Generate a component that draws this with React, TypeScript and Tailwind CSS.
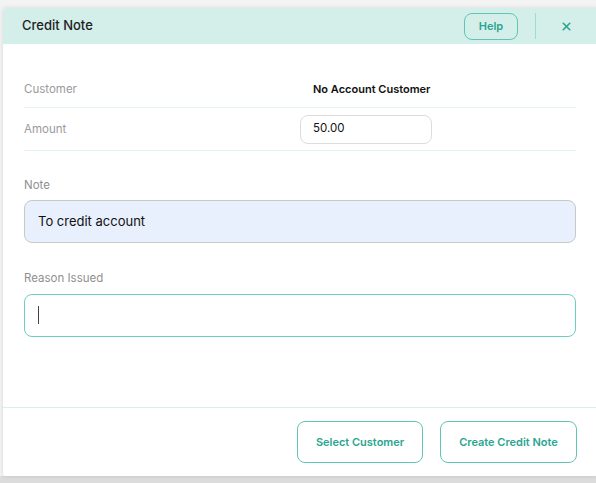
import { X } from 'lucide-react';

export default function App() {
  return (
    <div
      className="w-[596px] h-[483px] overflow-hidden bg-[#dcdcdc]"
      style={{ fontFamily: 'Inter, "Noto Sans", sans-serif' }}
    >
      <div className="h-[476px] bg-[#f3f3f3] pt-[8px] pl-[3px]">
        <div className="w-[595px] h-[468px] bg-white rounded-tl-[3px] rounded-bl-[3px] flex flex-col shadow-[0_0_4px_rgba(0,0,0,0.12)]">
          {/* header */}
          <div className="h-[36px] bg-[#d4eeea] flex items-center pl-[19px] pr-[25px] rounded-tl-[3px]">
            <h1 className="text-[13px] font-medium text-[#222] flex-1 -mt-[1px]">Credit Note</h1>
            <button className="h-[27px] w-[54px] rounded-lg border border-[#5ec6b2] text-[11px] font-semibold text-[#2aa58f]">
              Help
            </button>
            <div className="w-px h-[26px] bg-[#9fdccf] ml-[17px] mr-[24px]" />
            <X size={13} strokeWidth={3} className="text-[#2aa58f]" />
          </div>

          {/* body */}
          <div className="flex-1 px-[21px] pt-[28px]">
            <div className="w-[552px]">
              <div className="flex items-center h-[36px] border-b border-[#e4f3f0]">
                <span className="w-[289px] text-[11.5px] text-[#9a9a9a]">Customer</span>
                <span className="text-[11px] font-semibold text-[#111]">No Account Customer</span>
              </div>
              <div className="flex items-center h-[43px] border-b border-[#e4f3f0]">
                <span className="w-[276px] mt-[2px] text-[11.5px] text-[#9a9a9a]">Amount</span>
                <div className="w-[132px] h-[29px] rounded-lg border border-[#dcdcdc] flex items-center px-[12px] text-[11.5px] text-[#111]">
                  50.00
                </div>
              </div>

              <div className="mt-[26px] text-[11.5px] text-[#8f8f8f]">Note</div>
              <div className="mt-[6px] h-[43px] rounded-lg border border-[#c8c8c8] bg-[#e8effd] flex items-center px-[13px] text-[13px] text-[#111]">
                To credit account
              </div>

              <div className="mt-[27px] text-[11.5px] text-[#8f8f8f]">Reason Issued</div>
              <div className="mt-[6px] h-[43px] rounded-lg border border-[#6ccfbe] flex items-center px-[13px]">
                <span className="w-px h-[18px] bg-[#444]" />
              </div>
            </div>
          </div>

          {/* footer */}
          <div className="h-[69px] border-t border-[#dcefeb] flex items-center justify-end gap-[17px] pr-[21px]">
            <button className="w-[126px] h-[42px] rounded-lg border border-[#5ec6b2] text-[11px] font-semibold text-[#2aa58f]">
              Select Customer
            </button>
            <button className="w-[137px] h-[42px] rounded-lg border border-[#5ec6b2] text-[11px] font-semibold text-[#2aa58f]">
              Create Credit Note
            </button>
          </div>
        </div>
      </div>
    </div>
  );
}
